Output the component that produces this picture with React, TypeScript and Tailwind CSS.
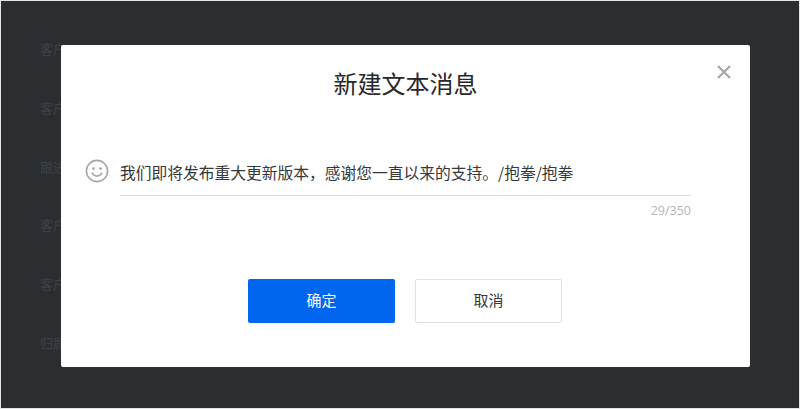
import React from 'react';

const labels = ['客户', '客户', '跟进', '客户', '客户', '归属'];

const SmileIcon = () => (
    <svg className="w-6 h-6 shrink-0" viewBox="0 0 24 24" fill="none" stroke="#a6a6a6">
        <circle cx="12" cy="12" r="10.6" strokeWidth="1.6" />
        <circle cx="8.4" cy="9.6" r="1.3" fill="#a6a6a6" stroke="none" />
        <circle cx="15.6" cy="9.6" r="1.3" fill="#a6a6a6" stroke="none" />
        <path d="M7.2 14.2c1.2 2 2.9 2.9 4.8 2.9s3.6-.9 4.8-2.9" strokeWidth="1.6" strokeLinecap="round" />
    </svg>
);

const CloseIcon = () => (
    <svg className="w-[14px] h-[14px]" viewBox="0 0 14 14" fill="none" stroke="#a3a6aa" strokeWidth="2.1">
        <path d="M1 1l12 12M13 1L1 13" />
    </svg>
);

export default function App() {
    return (
        <div className="relative box-border w-[800px] h-[409px] overflow-hidden border border-[#e4e5e6] bg-[#2b2e31] font-['Liberation_Sans','Noto_Sans_CJK_SC',sans-serif]">
            <div className="flex flex-col pt-[39px] pl-[39px] text-[13px] leading-5 text-[#3f4245]">
                {labels.map((label, i) => (
                    <div key={i} className="h-[58.8px]">{label}</div>
                ))}
            </div>

            <div className="absolute inset-0 flex items-start justify-center pt-[44px] pl-[11px]">
                <div className="relative w-[689px] h-[322px] bg-white rounded-[2px] flex flex-col">
                    <button className="absolute top-[20px] right-[19px]">
                        <CloseIcon />
                    </button>

                    <h2 className="pt-[24px] text-center text-[24px] leading-[32px] font-normal text-[#26282b]">新建文本消息</h2>

                    <div className="flex items-start gap-[11px] pl-[24px] pr-[59px] mt-[58px]">
                        <SmileIcon />
                        <div className="flex-1 min-w-0">
                            <div className="h-[37px] pt-[2px] border-b border-[#dcdde0] font-['Noto_Sans_CJK_SC',sans-serif] text-[15.75px] leading-[24px] text-[#35383b] whitespace-nowrap">
                                我们即将发布重大更新版本，感谢您一直以来的支持。/抱拳/抱拳
                            </div>
                            <div className="mt-[7px] text-right font-['Open_Sans',sans-serif] text-[12.5px] leading-4 text-[#b4b6b9]">29/350</div>
                        </div>
                    </div>

                    <div className="flex justify-center gap-[20px] mt-[60px] pr-[1px]">
                        <button className="w-[147px] h-[44px] pt-[1px] rounded-[2px] bg-[#0066f0] text-white text-[15px]">确定</button>
                        <button className="w-[147px] h-[44px] pt-[1px] rounded-[2px] bg-white border border-[#e0e1e4] text-[#35383b] text-[15px]">取消</button>
                    </div>
                </div>
            </div>
        </div>
    );
}
